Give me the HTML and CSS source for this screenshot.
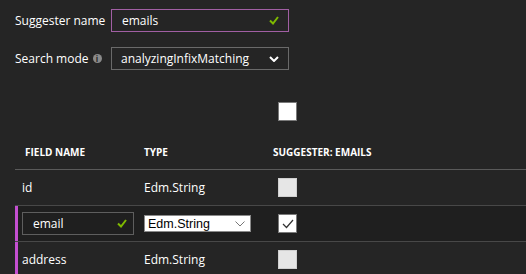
FILE: index.html
```html
<!DOCTYPE html>
<html lang="en">
<head>
  <meta charset="UTF-8" />
  <title>Suggester</title>
  <link rel="stylesheet" href="styles.css">
</head>
<body>
  <div class="form">
    <div class="form-row">
      <div class="label">Suggester name</div>
      <div class="text-input active">
        <span>emails</span>
        <svg class="ok" width="10" height="9" viewBox="0 0 10 9"><path d="M1 4.5 L4 7.5 L9 1" fill="none" stroke="#7fba00" stroke-width="2"/></svg>
      </div>
    </div>
    <div class="form-row mode">
      <div class="label">Search mode <span class="info">i</span></div>
      <div class="select">
        <span>analyzingInfixMatching</span>
        <svg width="10" height="6" viewBox="0 0 10 6"><path d="M1 1 L5 5 L9 1" fill="none" stroke="#fff" stroke-width="2"/></svg>
      </div>
    </div>
  </div>

  <div class="select-all">
    <div class="checkbox white"></div>
  </div>

  <div class="table">
    <div class="head">
      <div>FIELD NAME</div>
      <div>TYPE</div>
      <div>SUGGESTER: EMAILS</div>
    </div>
    <div class="row">
      <div class="cell">id</div>
      <div class="cell">Edm.String</div>
      <div class="cell"><div class="checkbox"></div></div>
    </div>
    <div class="row marked editing">
      <div class="cell">
        <div class="text-input small">
          <span>email</span>
          <svg class="ok" width="10" height="9" viewBox="0 0 10 9"><path d="M1 4.5 L4 7.5 L9 1" fill="none" stroke="#7fba00" stroke-width="2"/></svg>
        </div>
      </div>
      <div class="cell">
        <div class="type-select">
          <span>Edm.String</span>
          <svg width="10" height="6" viewBox="0 0 10 6"><path d="M0.5 0.5 L5 5 L9.5 0.5" fill="none" stroke="#777" stroke-width="1"/></svg>
        </div>
      </div>
      <div class="cell">
        <div class="checkbox white checked">
          <svg width="12" height="10" viewBox="0 0 12 10"><path d="M1 5 L4.5 8.5 L11 1" fill="none" stroke="#333" stroke-width="1.2"/></svg>
        </div>
      </div>
    </div>
    <div class="row marked">
      <div class="cell">address</div>
      <div class="cell">Edm.String</div>
      <div class="cell"><div class="checkbox"></div></div>
    </div>
  </div>
</body>
</html>
```

FILE: styles.css
```css
html, body {
  margin: 0;
  padding: 0;
  height: 100%;
  overflow: hidden;
  background-color: #252525;
  font-family: 'Open Sans', 'Noto Sans', sans-serif;
  font-size: 12px;
  color: #fff;
}

.form {
  padding: 9px 0 0 15px;
}

.form-row {
  display: flex;
  align-items: center;
  height: 23px;
}

.form-row.mode {
  margin-top: 15px;
}

.label {
  width: 96px;
  display: flex;
  align-items: center;
}

.info {
  display: inline-flex;
  align-items: center;
  justify-content: center;
  width: 9px;
  height: 9px;
  margin-left: 4px;
  border-radius: 50%;
  background: #8a8a8a;
  color: #252525;
  font-size: 8px;
  font-weight: 700;
  line-height: 1;
}

.text-input,
.select {
  box-sizing: border-box;
  width: 178px;
  height: 23px;
  display: flex;
  align-items: center;
  justify-content: space-between;
  padding: 0 9px 0 10px;
  border: 1px solid #6a6a6a;
}

.text-input.active {
  border-color: #a15fa3;
}

.select {
  padding: 0 9px 0 9px;
}

.select-all {
  padding: 32px 0 0 278px;
}

.checkbox {
  box-sizing: border-box;
  width: 19px;
  height: 19px;
  background: #e6e6e6;
  border: 1px solid #d0d0d0;
  display: flex;
  align-items: center;
  justify-content: center;
}

.checkbox.white {
  background: #fff;
  border-color: #7a7a7a;
}

.table {
  margin: 0 0 0 15px;
}

.head,
.row {
  display: grid;
  grid-template-columns: 129px 129px 1fr;
  align-items: center;
}

.head {
  height: 48px;
  font-size: 10px;
  font-weight: 700;
  border-bottom: 1px solid #5a5a5a;
}

.head div {
  padding-left: 10px;
  padding-top: 14px;
}

.head div:nth-child(2),
.head div:nth-child(3) {
  padding-left: 0;
}

.row {
  height: 35px;
  border-bottom: 1px solid #484848;
}

.row .cell:first-child {
  padding-left: 7px;
}

.row .cell:last-child {
  padding-left: 5px;
}

.row.marked {
  box-shadow: inset 3px 0 0 #c44fd1;
}

.row.editing {
  background: #1f1f1f;
}

.text-input.small {
  width: 112px;
  height: 23px;
  padding: 0 6px 0 10px;
  border-color: #5e5e5e;
}

.type-select {
  box-sizing: border-box;
  width: 107px;
  height: 17px;
  display: flex;
  align-items: center;
  justify-content: space-between;
  padding: 0 5px 0 3px;
  background: #fff;
  border: 1px solid #8a8a8a;
  color: #000;
  font-family: 'Liberation Sans', Arial, sans-serif;
  font-size: 12.5px;
}
```
